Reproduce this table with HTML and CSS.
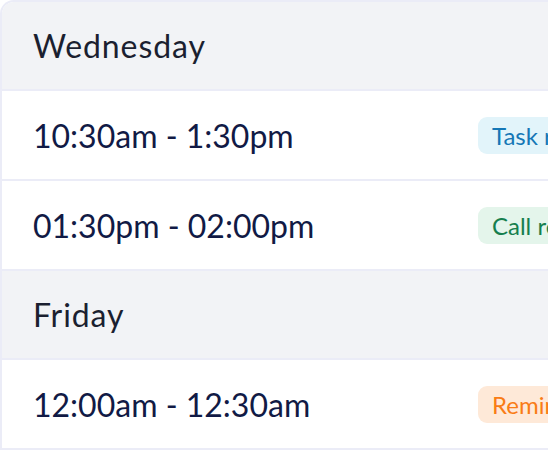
FILE: index.html
```html
<!DOCTYPE html>
<html>
<head>
<meta charset="utf-8">
<link rel="stylesheet" href="styles.css">
</head>
<body>
<div class="card">
  <div class="day">Wednesday</div>
  <div class="row">
    <div class="time">10:30am - 1:30pm</div>
    <div class="cell"><span class="badge task">Task reminder</span></div>
  </div>
  <div class="row">
    <div class="time">01:30pm - 02:00pm</div>
    <div class="cell"><span class="badge call">Call reminder</span></div>
  </div>
  <div class="day">Friday</div>
  <div class="row">
    <div class="time">12:00am - 12:30am</div>
    <div class="cell"><span class="badge remind">Reminder</span></div>
  </div>
</div>
</body>
</html>
```
FILE: styles.css
```css
html, body {
  margin: 0;
  padding: 0;
  background: #ffffff;
  overflow: hidden;
  width: 548px;
  height: 450px;
}
.card {
  width: 760px;
  border: 2px solid #ebecf7;
  border-bottom: none;
  border-radius: 14px 14px 0 0;
  overflow: hidden;
  font-family: Lato, "Open Sans", sans-serif;
}
.day {
  box-sizing: border-box;
  display: flex;
  align-items: center;
  padding-left: 31px;
  background: #f2f3f6;
  color: #1b1f30;
  font-size: 32px;
  letter-spacing: 0.9px;
  border-bottom: 2px solid #ebecf7;
  height: 89px;
}
.row {
  display: grid;
  grid-template-columns: 445px 1fr;
  align-items: center;
  height: 90px;
  box-sizing: border-box;
  border-bottom: 2px solid #ebecf7;
  padding-left: 31px;
  background: #fff;
}
.time {
  font-size: 32px;
  color: #111a45;
}
.badge {
  display: inline-block;
  font-size: 24px;
  line-height: 37px;
  height: 37px;
  padding: 0 14px;
  border-radius: 9px;
  white-space: nowrap;
}
.task { background: #e2f4fa; color: #1577b6; }
.call { background: #e4f5eb; color: #167f4e; }
.remind { background: #fee9d8; color: #f97c16; }
```
